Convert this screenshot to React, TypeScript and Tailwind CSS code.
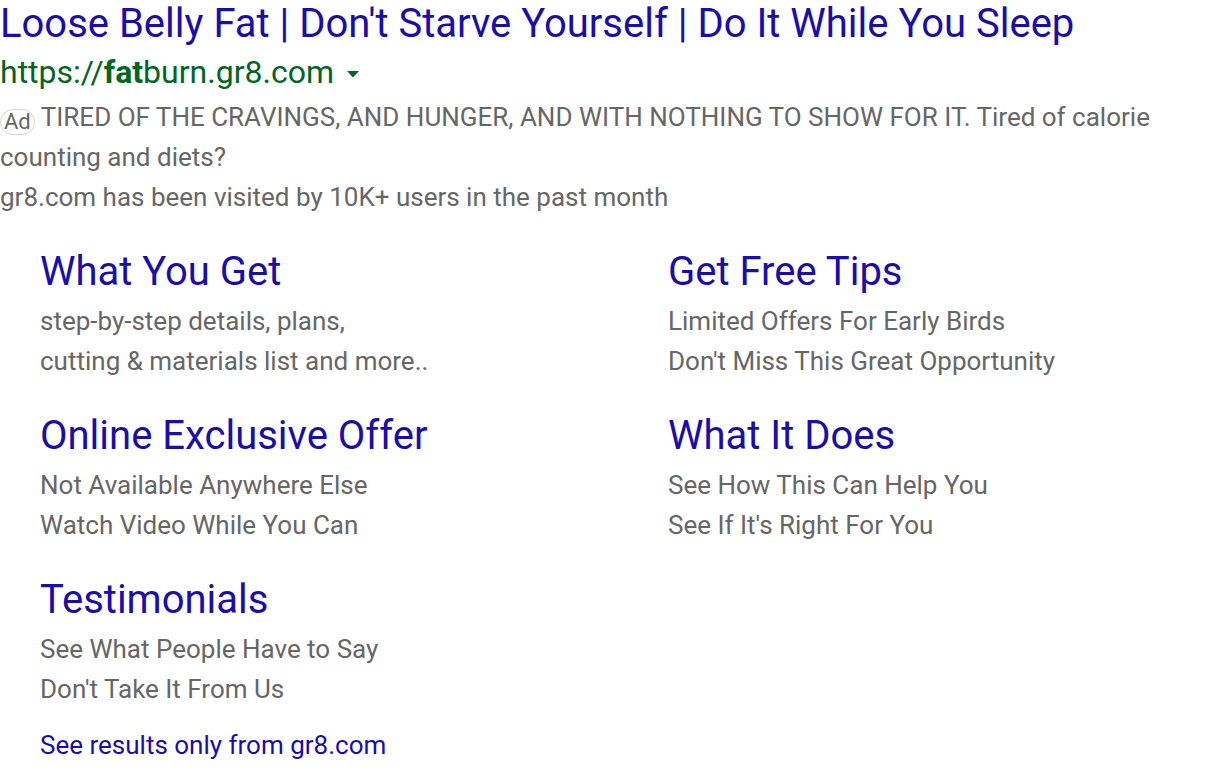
import React from "react";

const sitelinks = [
  { title: "What You Get", lines: ["step-by-step details, plans,", "cutting & materials list and more.."] },
  { title: "Get Free Tips", lines: ["Limited Offers For Early Birds", "Don't Miss This Great Opportunity"] },
  { title: "Online Exclusive Offer", lines: ["Not Available Anywhere Else", "Watch Video While You Can"] },
  { title: "What It Does", lines: ["See How This Can Help You", "See If It's Right For You"] },
  { title: "Testimonials", lines: ["See What People Have to Say", "Don't Take It From Us"] },
];

export default function App() {
  return (
    <div className="w-[1216px] h-[768px] bg-white overflow-hidden" style={{ fontFamily: "Roboto, Arial, sans-serif" }}>
      <div className="text-[40px] leading-[48px] text-[#1a0dab] whitespace-nowrap">
        Loose Belly Fat | Don't Starve Yourself | Do It While You Sleep
      </div>
      <div className="flex items-center h-[48px] text-[32px] text-[#006621] whitespace-nowrap">
        <span>
          https://<b className="font-bold">fat</b>burn.gr8.com
        </span>
        <svg width="12" height="7" viewBox="0 0 12 7" className="ml-[13px] mt-[5px]">
          <path d="M0 0 L12 0 L6 6.5 Z" fill="#006621" />
        </svg>
      </div>
      <div className="text-[26px] leading-[40px] text-[#666666] mt-[1px] pr-[40px]">
        <span className="inline-flex items-center justify-center h-[26px] px-[3px] mr-[6px] rounded-full border border-[#d4d4d4] text-[22px] leading-none align-[-3px]">
          Ad
        </span>
        TIRED OF THE CRAVINGS, AND HUNGER, AND WITH NOTHING TO SHOW FOR IT. Tired of calorie counting and diets?
      </div>
      <div className="text-[26px] leading-[40px] text-[#666666]">
        gr8.com has been visited by 10K+ users in the past month
      </div>
      <div className="grid grid-cols-[628px_1fr] pl-[40px] mt-[31px] gap-y-[31px]">
        {sitelinks.map((s) => (
          <div key={s.title}>
            <div className="text-[40px] leading-[48px] text-[#1a0dab] whitespace-nowrap">{s.title}</div>
            <div className="mt-[5px] text-[26px] leading-[40px] text-[#666666]">
              {s.lines.map((l) => (
                <div key={l} className="whitespace-nowrap">{l}</div>
              ))}
            </div>
          </div>
        ))}
      </div>
      <div className="pl-[40px] mt-[16px] text-[26px] leading-[40px] text-[#1a0dab]">See results only from gr8.com</div>
    </div>
  );
}
